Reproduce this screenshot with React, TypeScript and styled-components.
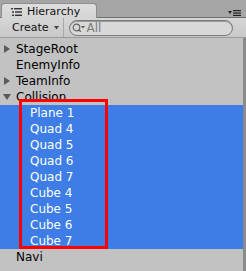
import styled, { createGlobalStyle } from 'styled-components';

const Global = createGlobalStyle`
  html, body { margin: 0; padding: 0; background: #a5a5a5; }
  body { font-family: "DejaVu Sans", Verdana, sans-serif; }
`;

const Panel = styled.div`
  width: 246px;
  height: 271px;
  display: flex;
  flex-direction: column;
  background: #a5a5a5;
  overflow: hidden;
  position: relative;
`;

const TabBar = styled.div`
  height: 17px;
  display: flex;
  align-items: flex-end;
  padding-left: 1px;
  position: relative;
  border-bottom: 1px solid #6e6e6e;
`;

const Tab = styled.div`
  width: 96px;
  height: 15px;
  background: linear-gradient(#dedede, #d4d4d4);
  border: 1px solid #8e8e8e;
  border-bottom: none;
  border-radius: 4px 4px 0 0;
  display: flex;
  align-items: center;
  gap: 5px;
  padding: 1px 0 0 9px;
  box-sizing: border-box;
  font-size: 11px;
  line-height: 13px;
  color: #111;
  margin-bottom: -1px;
`;

const TabMenu = styled.div`
  position: absolute;
  right: 4px;
  top: 10px;
  display: flex;
  align-items: center;
`;

const Toolbar = styled.div`
  height: 19px;
  display: flex;
  align-items: center;
  background: linear-gradient(#d6d6d6, #c8c8c8);
  border-bottom: 1px solid #9a9a9a;
  padding: 0 13px 0 1px;
`;

const CreateButton = styled.div`
  display: flex;
  align-items: center;
  gap: 5px;
  height: 100%;
  padding: 0 4px 0 11px;
  font-size: 11px;
  color: #111;
  border-right: 1px solid #a8a8a8;
`;

const Search = styled.div`
  flex: 1;
  height: 14px;
  margin-left: 5px;
  border: 1px solid #7a7a7a;
  border-radius: 8px;
  background: #d8d8d8;
  display: flex;
  align-items: center;
  padding-left: 2px;
  gap: 1px;
  font-size: 12px;
  color: #7a7a7a;
  box-shadow: inset 0 1px 0 #9a9a9a;
`;

const Tree = styled.div`
  flex: 1;
  background: #c2c2c2;
  padding-top: 3px;
  border-right: 3px solid #8a8a8a;
  position: relative;
`;

const Row = styled.div<{ $depth: number; $selected?: boolean }>`
  height: 16px;
  display: flex;
  align-items: center;
  padding-left: ${({ $depth }) => 3 + $depth * 14}px;
  background: ${({ $selected }) => ($selected ? '#3d7de5' : 'transparent')};
  color: ${({ $selected }) => ($selected ? '#ffffff' : '#000000')};
  font-size: 12px;
`;

const Arrow = styled.span`
  width: 13px;
  display: flex;
  align-items: center;
`;

const Highlight = styled.div`
  position: absolute;
  left: 19px;
  top: 61px;
  width: 89px;
  height: 150px;
  border: 3px solid #ff0000;
  box-sizing: border-box;
`;

type Node = { name: string; depth: number; arrow?: 'right' | 'down'; selected?: boolean };

const nodes: Node[] = [
  { name: 'StageRoot', depth: 0, arrow: 'right' },
  { name: 'EnemyInfo', depth: 0 },
  { name: 'TeamInfo', depth: 0, arrow: 'right' },
  { name: 'Collision', depth: 0, arrow: 'down' },
  { name: 'Plane 1', depth: 1, selected: true },
  { name: 'Quad 4', depth: 1, selected: true },
  { name: 'Quad 5', depth: 1, selected: true },
  { name: 'Quad 6', depth: 1, selected: true },
  { name: 'Quad 7', depth: 1, selected: true },
  { name: 'Cube 4', depth: 1, selected: true },
  { name: 'Cube 5', depth: 1, selected: true },
  { name: 'Cube 6', depth: 1, selected: true },
  { name: 'Cube 7', depth: 1, selected: true },
  { name: 'Navi', depth: 0 },
];

const ArrowIcon = ({ dir }: { dir?: 'right' | 'down' }) => {
  if (!dir) return null;
  return (
    <svg width="8" height="8" viewBox="0 0 8 8">
      {dir === 'right' ? (
        <path d="M1 0 L7 4 L1 8 Z" fill="#5a5a5a" />
      ) : (
        <path d="M0 1 L8 1 L4 7 Z" fill="#5a5a5a" />
      )}
    </svg>
  );
};

export default function App() {
  return (
    <>
      <Global />
      <Panel>
        <TabBar>
          <Tab>
            <svg width="11" height="8" viewBox="0 0 11 8">
              <rect x="0" y="0" width="2" height="1.4" fill="#333" />
              <rect x="3" y="0" width="8" height="1.4" fill="#333" />
              <rect x="1" y="3.3" width="2" height="1.4" fill="#333" />
              <rect x="4" y="3.3" width="7" height="1.4" fill="#333" />
              <rect x="1" y="6.6" width="2" height="1.4" fill="#333" />
              <rect x="4" y="6.6" width="7" height="1.4" fill="#333" />
            </svg>
            Hierarchy
          </Tab>
          <TabMenu>
            <svg width="14" height="6" viewBox="0 0 14 6">
              <path d="M0 1 L4 1 L2 4 Z" fill="#222" />
              <rect x="5" y="0" width="8" height="1.2" fill="#222" />
              <rect x="5" y="2.4" width="8" height="1.2" fill="#222" />
              <rect x="5" y="4.8" width="8" height="1.2" fill="#222" />
            </svg>
          </TabMenu>
        </TabBar>
        <Toolbar>
          <CreateButton>
            Create
            <svg width="5" height="4" viewBox="0 0 5 4">
              <path d="M0 0 L5 0 L2.5 3.5 Z" fill="#444" />
            </svg>
          </CreateButton>
          <Search>
            <svg width="14" height="10" viewBox="0 0 14 10">
              <circle cx="4.5" cy="4.5" r="3.3" fill="none" stroke="#666" strokeWidth="1.2" />
              <path d="M6.8 6.8 L8.8 8.8" stroke="#666" strokeWidth="1.4" />
              <path d="M9 3 L13 3 L11 5.5 Z" fill="#555" />
            </svg>
            All
          </Search>
        </Toolbar>
        <Tree>
          {nodes.map((n) => (
            <Row key={n.name} $depth={n.depth} $selected={n.selected}>
              <Arrow>
                <ArrowIcon dir={n.arrow} />
              </Arrow>
              {n.name}
            </Row>
          ))}
          <Highlight />
        </Tree>
      </Panel>
    </>
  );
}
